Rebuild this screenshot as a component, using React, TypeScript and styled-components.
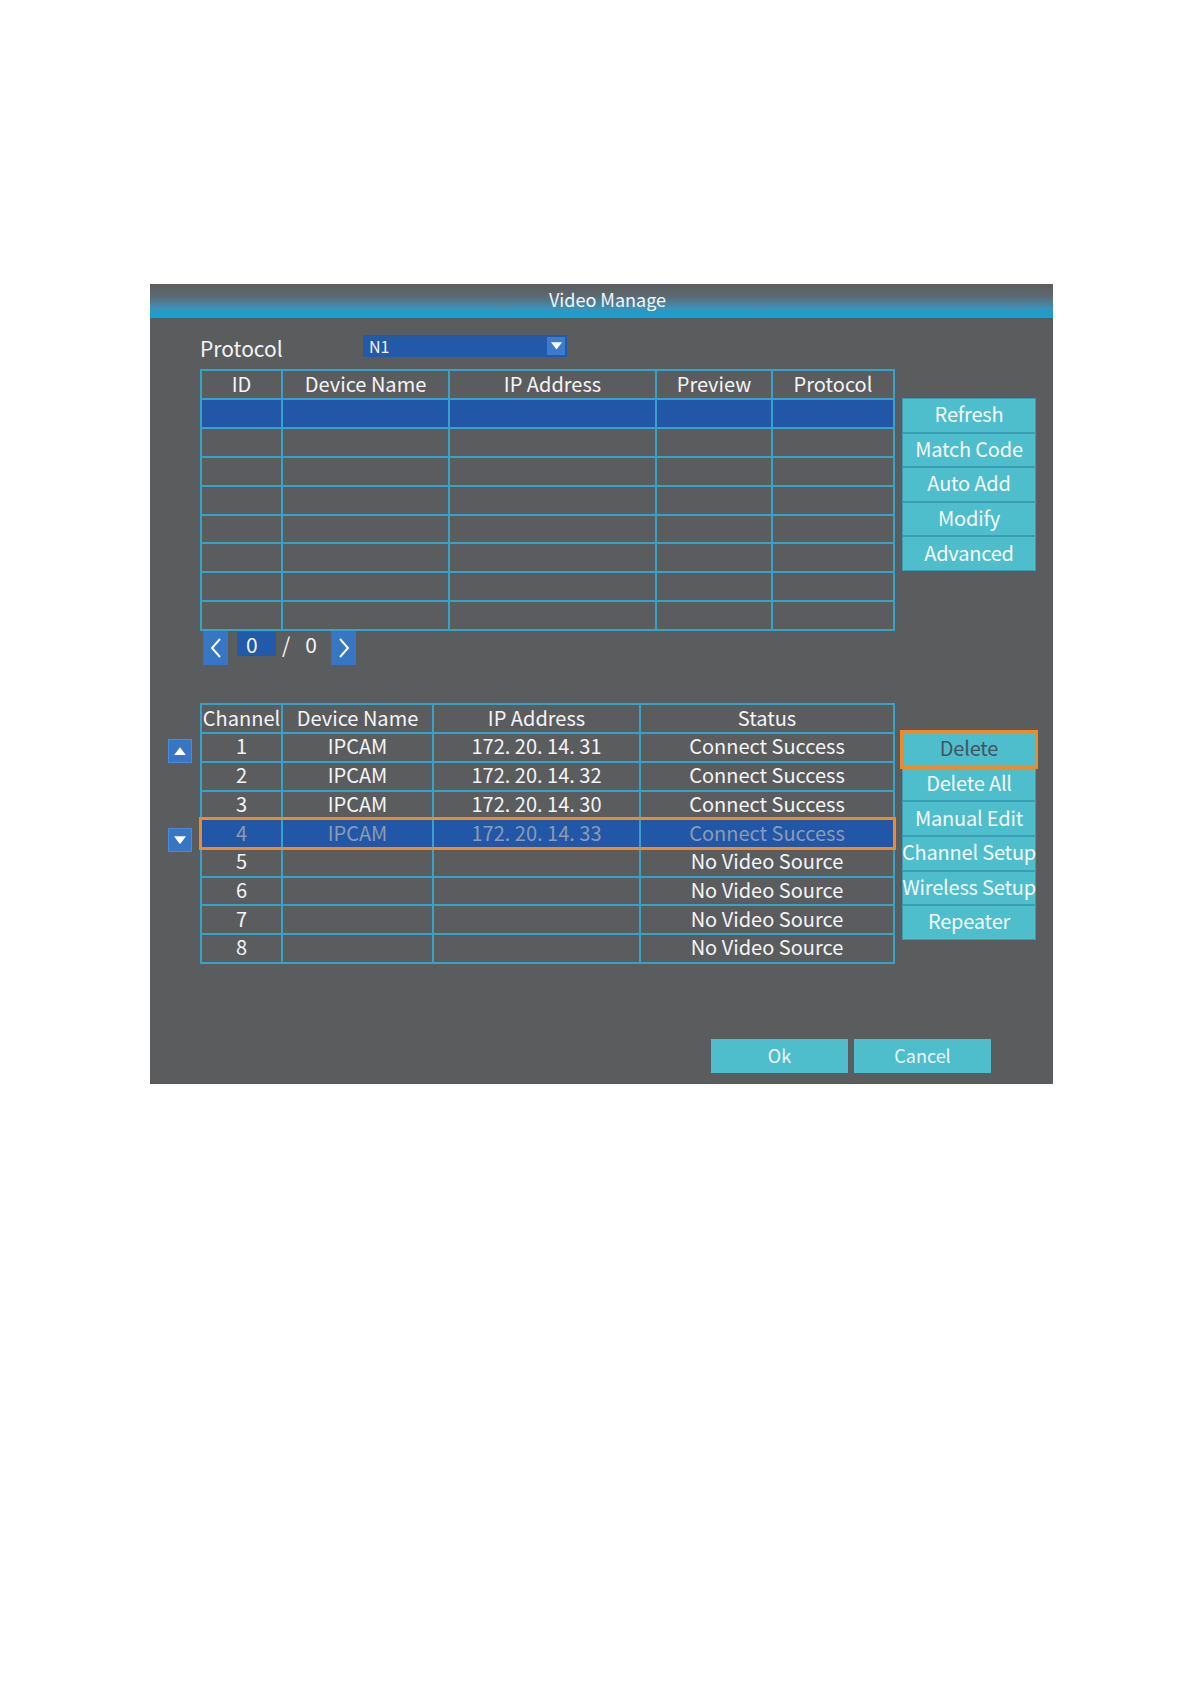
import React from 'react';
import styled, { createGlobalStyle } from 'styled-components';

const Global = createGlobalStyle`
  html, body { margin: 0; padding: 0; background: #ffffff; }
  body { font-family: "Noto Sans CJK SC", "Noto Sans", sans-serif; }
  * { box-sizing: border-box; }
`;

const Page = styled.div`
  width: 1191px;
  height: 1684px;
  padding: 284px 0 0 150px;
`;

const Panel = styled.div`
  width: 903px;
  height: 800px;
  background: #5b5c5e;
  display: flex;
  flex-direction: column;
  color: #f3f5f6;
`;

const TitleBar = styled.div`
  height: 34px;
  flex: none;
  background: linear-gradient(180deg, #5c5d5f 0%, #5d6870 35%, #3f8fb3 70%, #0aa7dc 100%);
  display: flex;
  align-items: center;
  justify-content: center;
  font-size: 18px;
  padding: 0 0 4px 12px;
  color: #f4f6f8;
`;

const ProtocolRow = styled.div`
  margin-top: 17px;
  height: 22px;
  display: flex;
  align-items: center;
  padding-left: 50px;
`;

const Label = styled.div`
  width: 163px;
  font-size: 21px;
  line-height: 1;
  padding-top: 4px;
`;

const Select = styled.div`
  width: 204px;
  height: 22px;
  background: #2259a8;
  display: flex;
  align-items: center;
  justify-content: space-between;
  padding: 0 2px 0 6px;
  font-size: 16px;
`;

const SelectArrow = styled.div`
  width: 18px;
  height: 18px;
  background: #3b7bd2;
  display: flex;
  align-items: center;
  justify-content: center;
`;

const Section = styled.div<{ $top: number; $left: number }>`
  margin-top: ${p => p.$top}px;
  padding-left: ${p => p.$left}px;
  display: flex;
  align-items: flex-start;
`;

const Table = styled.div`
  width: 695px;
  background: #36a2c8;
  padding: 2px;
  display: flex;
  flex-direction: column;
  gap: 2px;
`;

const Row = styled.div<{ $cols: string; $h: number; $highlight?: boolean }>`
  display: grid;
  grid-template-columns: ${p => p.$cols};
  column-gap: 2px;
  height: ${p => p.$h}px;
  position: relative;
  ${p => (p.$highlight ? 'outline: 3px solid #f08a26; outline-offset: 0px; z-index: 1;' : '')}
`;

const Cell = styled.div<{ $sel?: boolean; $dim?: boolean }>`
  background: ${p => (p.$sel ? '#2157a6' : '#5b5c5e')};
  color: ${p => (p.$dim ? '#8a9bb4' : '#f3f5f6')};
  font-size: 20px;
  line-height: 1;
  display: flex;
  align-items: center;
  justify-content: center;
  padding-bottom: 2px;
  white-space: nowrap;
  overflow: visible;
`;

const ButtonStack = styled.div<{ $top: number }>`
  margin-left: 7px;
  margin-top: ${p => p.$top}px;
  width: 134px;
  background: #3a9db3;
  display: flex;
  flex-direction: column;
  gap: 2px;
  padding: 1px;
`;

const SideButton = styled.div<{ $active?: boolean }>`
  height: 32.6px;
  background: #4fbecc;
  color: ${p => (p.$active ? '#445460' : '#f4f8f9')};
  font-size: 20px;
  line-height: 1;
  display: flex;
  align-items: center;
  justify-content: center;
  padding-bottom: 2px;
  white-space: nowrap;
  letter-spacing: -0.2px;
  position: relative;
  ${p => (p.$active ? 'outline: 3px solid #f08a26; z-index: 1;' : '')}
`;

const Pager = styled.div`
  padding-left: 53px;
  height: 34px;
  display: flex;
  align-items: center;
`;

const PagerArrow = styled.div<{ $gap?: number }>`
  width: 25px;
  height: 34px;
  margin-left: ${p => p.$gap ?? 0}px;
  background: #3676c4;
  display: flex;
  align-items: center;
  justify-content: center;
`;

const PageInput = styled.div`
  width: 39px;
  height: 24px;
  margin-left: 9px;
  background: #2259a8;
  font-size: 21px;
  line-height: 1;
  display: flex;
  align-items: center;
  padding-left: 9px;
  margin-top: -8px;
`;

const PageText = styled.div<{ $w: number }>`
  width: ${p => p.$w}px;
  font-size: 21px;
  line-height: 1;
  text-align: center;
  margin-top: -8px;
`;

const ArrowColumn = styled.div`
  width: 25px;
  margin-right: 7px;
  padding-top: 36px;
  display: flex;
  flex-direction: column;
  gap: 65px;
`;

const ScrollButton = styled.div`
  width: 24px;
  height: 24px;
  background: #3676c4;
  border: 1px solid #4a8ad6;
  display: flex;
  align-items: center;
  justify-content: center;
`;

const Footer = styled.div`
  margin-top: 75px;
  display: flex;
  justify-content: flex-end;
  gap: 6px;
  padding-right: 62px;
`;

const FooterButton = styled.div`
  width: 137px;
  height: 34px;
  background: #4fbecc;
  color: #eef5f7;
  font-size: 18px;
  display: flex;
  align-items: center;
  justify-content: center;
  padding-bottom: 1px;
`;

const Chevron = ({ dir }: { dir: 'left' | 'right' }) => (
  <svg width="12" height="22" viewBox="0 0 12 22">
    <polyline
      points={dir === 'left' ? '10,2 2,11 10,20' : '2,2 10,11 2,20'}
      fill="none"
      stroke="#ffffff"
      strokeWidth="2"
    />
  </svg>
);

const Tri = ({ dir, size = 12 }: { dir: 'up' | 'down'; size?: number }) => (
  <svg width={size} height={size * 0.7} viewBox="0 0 12 8">
    <polygon points={dir === 'up' ? '6,0 12,8 0,8' : '0,0 12,0 6,8'} fill="#ffffff" />
  </svg>
);

const cols1 = '79px 165px 205px 114px 120px';
const cols2 = '79px 149px 205px 252px';

const devices = [
  ['1', 'IPCAM', '172. 20. 14. 31', 'Connect Success'],
  ['2', 'IPCAM', '172. 20. 14. 32', 'Connect Success'],
  ['3', 'IPCAM', '172. 20. 14. 30', 'Connect Success'],
  ['4', 'IPCAM', '172. 20. 14. 33', 'Connect Success'],
  ['5', '', '', 'No Video Source'],
  ['6', '', '', 'No Video Source'],
  ['7', '', '', 'No Video Source'],
  ['8', '', '', 'No Video Source'],
];

export default function App() {
  return (
    <Page>
      <Global />
      <Panel>
        <TitleBar>Video Manage</TitleBar>
        <ProtocolRow>
          <Label>Protocol</Label>
          <Select>
            <span>N1</span>
            <SelectArrow>
              <Tri dir="down" size={11} />
            </SelectArrow>
          </Select>
        </ProtocolRow>

        <Section $top={12} $left={50}>
          <Table>
            <Row $cols={cols1} $h={27}>
              {['ID', 'Device Name', 'IP Address', 'Preview', 'Protocol'].map(h => (
                <Cell key={h}>{h}</Cell>
              ))}
            </Row>
            {Array.from({ length: 8 }).map((_, r) => (
              <Row key={r} $cols={cols1} $h={26.9}>
                {Array.from({ length: 5 }).map((__, c) => (
                  <Cell key={c} $sel={r === 0} />
                ))}
              </Row>
            ))}
          </Table>
          <ButtonStack $top={29}>
            {['Refresh', 'Match Code', 'Auto Add', 'Modify', 'Advanced'].map(b => (
              <SideButton key={b}>{b}</SideButton>
            ))}
          </ButtonStack>
        </Section>

        <Pager>
          <PagerArrow>
            <Chevron dir="left" />
          </PagerArrow>
          <PageInput>0</PageInput>
          <PageText $w={20}>/</PageText>
          <PageText $w={30}>0</PageText>
          <PagerArrow $gap={5}>
            <Chevron dir="right" />
          </PagerArrow>
        </Pager>

        <Section $top={38} $left={18}>
          <ArrowColumn>
            <ScrollButton>
              <Tri dir="up" />
            </ScrollButton>
            <ScrollButton>
              <Tri dir="down" />
            </ScrollButton>
          </ArrowColumn>
          <Table>
            <Row $cols={cols2} $h={27}>
              {['Channel', 'Device Name', 'IP Address', 'Status'].map(h => (
                <Cell key={h}>{h}</Cell>
              ))}
            </Row>
            {devices.map((d, r) => (
              <Row key={r} $cols={cols2} $h={26.7} $highlight={r === 3}>
                {d.map((v, c) => (
                  <Cell key={c} $sel={r === 3} $dim={r === 3}>
                    {v}
                  </Cell>
                ))}
              </Row>
            ))}
          </Table>
          <ButtonStack $top={29}>
            {['Delete', 'Delete All', 'Manual Edit', 'Channel Setup', 'Wireless Setup', 'Repeater'].map(
              (b, i) => (
                <SideButton key={b} $active={i === 0}>
                  {b}
                </SideButton>
              )
            )}
          </ButtonStack>
        </Section>

        <Footer>
          <FooterButton>Ok</FooterButton>
          <FooterButton>Cancel</FooterButton>
        </Footer>
      </Panel>
    </Page>
  );
}
